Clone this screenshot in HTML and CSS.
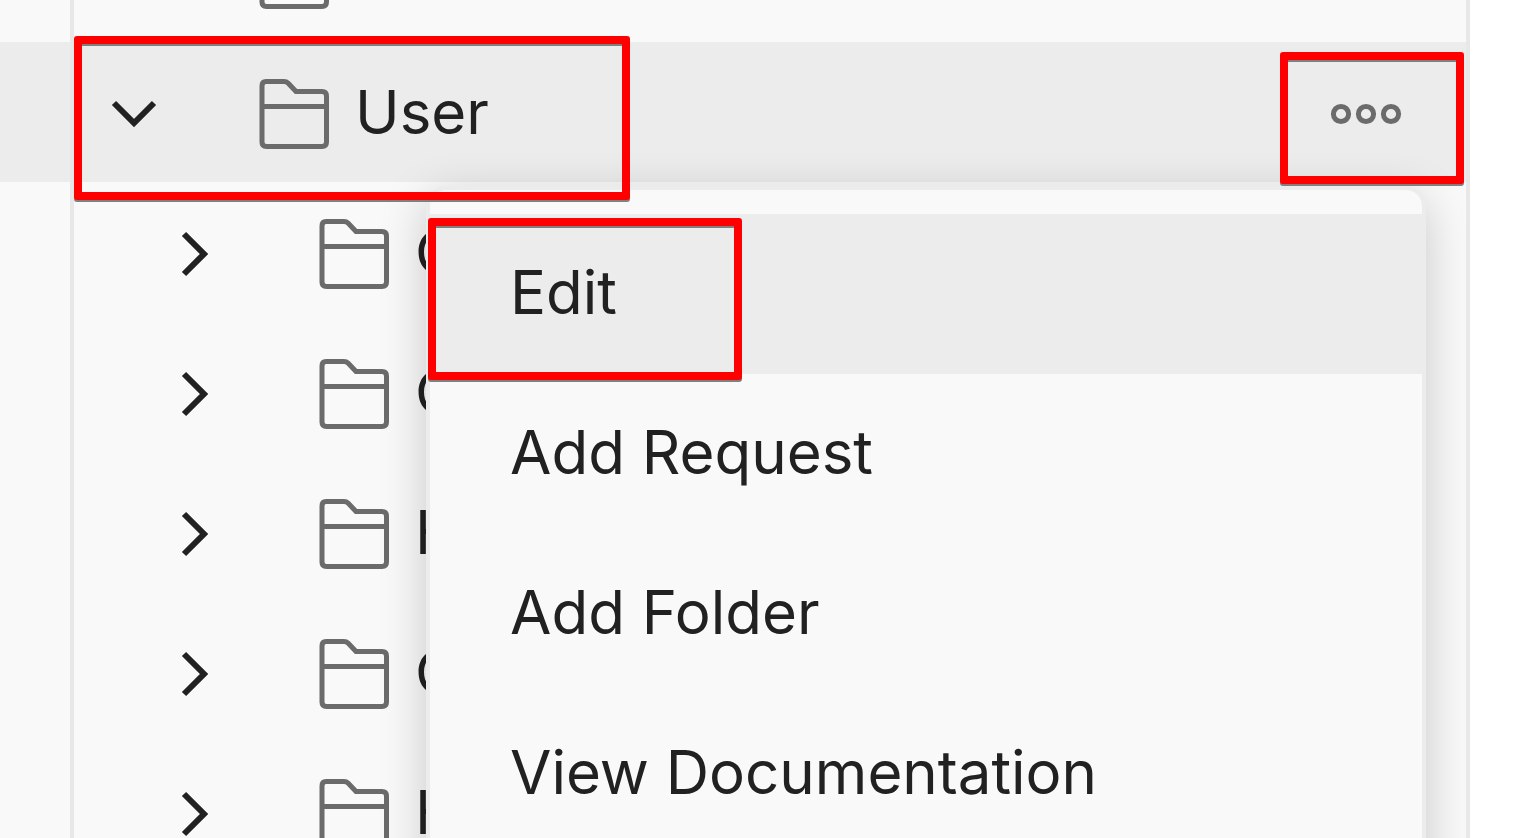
FILE: index.html
```html
<!DOCTYPE html>
<html lang="en">
<head>
<meta charset="utf-8">
<title>Collections</title>
<link rel="stylesheet" href="styles.css">
</head>
<body>
<svg class="defs" aria-hidden="true">
  <symbol id="folder" viewBox="0 0 72 80">
    <path d="M8 9.500H26Q28.500 9.500 30 11L38 19.500H64Q68.500 19.500 68.500 24V70Q68.500 74.500 64 74.500H8.500Q4 74.500 4 70V14Q4 9.500 8 9.500ZM4 34.500H68.500"/>
  </symbol>
  <symbol id="chevron-down" viewBox="0 0 60 60"><path d="M10 21L30 41L50 21"/></symbol>
  <symbol id="chevron-right" viewBox="0 0 60 60"><path d="M20 12L40 32L20 52"/></symbol>
  <symbol id="dots" viewBox="0 0 80 80">
    <circle cx="15" cy="42" r="7.600"/><circle cx="40" cy="42" r="7.600"/><circle cx="65" cy="42" r="7.600"/>
  </symbol>
</svg>
<div class="shell">
  <div class="rail"><div class="rail-highlight"></div></div>
  <nav class="sidebar" aria-label="Collections">
    <div class="row row-cut"><svg class="folder"><use href="#folder"/></svg></div>
    <div class="row row-active">
      <button class="toggle" type="button" aria-expanded="true">
        <svg class="chevron"><use href="#chevron-down"/></svg>
        <svg class="folder"><use href="#folder"/></svg>
        <span class="name">User</span>
      </button>
      <button class="more" type="button" aria-label="More actions">
        <svg class="dots"><use href="#dots"/></svg>
        <span class="mark mark-more"></span>
      </button>
      <span class="mark mark-row"></span>
      <div class="menu" role="menu">
        <button class="item item-active" type="button" role="menuitem">Edit<span class="mark mark-item"></span></button>
        <button class="item" type="button" role="menuitem">Add Request</button>
        <button class="item" type="button" role="menuitem">Add Folder</button>
        <button class="item" type="button" role="menuitem">View Documentation</button>
      </div>
    </div>
    <div class="row row-child"><button class="toggle" type="button"><svg class="chevron"><use href="#chevron-right"/></svg><svg class="folder"><use href="#folder"/></svg><span class="name">C</span></button></div>
    <div class="row row-child"><button class="toggle" type="button"><svg class="chevron"><use href="#chevron-right"/></svg><svg class="folder"><use href="#folder"/></svg><span class="name">C</span></button></div>
    <div class="row row-child"><button class="toggle" type="button"><svg class="chevron"><use href="#chevron-right"/></svg><svg class="folder"><use href="#folder"/></svg><span class="name">H</span></button></div>
    <div class="row row-child"><button class="toggle" type="button"><svg class="chevron"><use href="#chevron-right"/></svg><svg class="folder"><use href="#folder"/></svg><span class="name">C</span></button></div>
    <div class="row row-child"><button class="toggle" type="button"><svg class="chevron"><use href="#chevron-right"/></svg><svg class="folder"><use href="#folder"/></svg><span class="name">H</span></button></div>
  </nav>
</div>
</body>
</html>
```
FILE: styles.css
```css
* {
  box-sizing: border-box;
}

body {
  margin: 0;
  overflow: hidden;
  background: #fff;
  color: #212121;
  font-family: Inter, "Liberation Sans", sans-serif;
  font-size: 60px;
  line-height: 80px;
}

button {
  padding: 0;
  border: 0;
  background: none;
  color: inherit;
  font: inherit;
  text-align: left;
}

.defs {
  display: none;
}

.shell {
  display: flex;
  height: 100vh;
  padding-right: 52px;
}

.rail {
  width: 70px;
  padding-top: 42px;
  background: #f9f9f9;
}

.rail-highlight {
  height: 140px;
  background: #ececec;
}

.sidebar {
  flex: 1;
  overflow: hidden;
  border: solid #e8e8e8;
  border-width: 0 4px;
  background: #f9f9f9;
}

.row {
  display: flex;
  align-items: center;
  justify-content: space-between;
  height: 140px;
  padding-left: 30px;
}

.row-cut {
  align-items: flex-end;
  height: 42px;
  padding: 0 0 30px 184px;
  overflow: hidden;
}

.row-active {
  position: relative;
  background: #ececec;
}

.row-child {
  padding-left: 90px;
}

.toggle {
  display: flex;
  align-items: center;
}

.chevron {
  width: 60px;
  height: 60px;
  margin-right: 94px;
  fill: none;
  stroke: #212121;
  stroke-width: 6;
}

.folder {
  flex: none;
  width: 72px;
  height: 80px;
  margin-right: 25px;
  fill: none;
  stroke: #6b6b6b;
  stroke-width: 5;
}

.more {
  position: relative;
  display: flex;
  justify-content: center;
  width: 160px;
  margin-right: 20px;
}

.dots {
  width: 80px;
  height: 80px;
  fill: none;
  stroke: #6b6b6b;
  stroke-width: 5;
}

.menu {
  position: absolute;
  z-index: 1;
  top: 144px;
  right: 40px;
  left: 352px;
  padding: 24px 0 80px;
  border: 4px solid #ececec;
  border-radius: 20px;
  background: #f9f9f9;
  box-shadow: 0 12px 48px rgba(0, 0, 0, 0.2);
}

.item {
  position: relative;
  display: block;
  width: 100%;
  height: 160px;
  padding: 0 80px 4px;
}

.item-active {
  background: #ececec;
}

/* Callout frames */
.mark {
  position: absolute;
  border: 8px solid #f00;
  border-radius: 3px;
  filter: drop-shadow(0 2px 0 #808080);
  pointer-events: none;
}

.mark-row {
  z-index: 2;
  top: -6px;
  left: 0;
  width: 556px;
  height: 164px;
}

.mark-more {
  z-index: 2;
  top: -20px;
  right: -18px;
  left: -6px;
  height: 132px;
}

.mark-item {
  top: 4px;
  left: -2px;
  width: 314px;
  height: 162px;
}
```
